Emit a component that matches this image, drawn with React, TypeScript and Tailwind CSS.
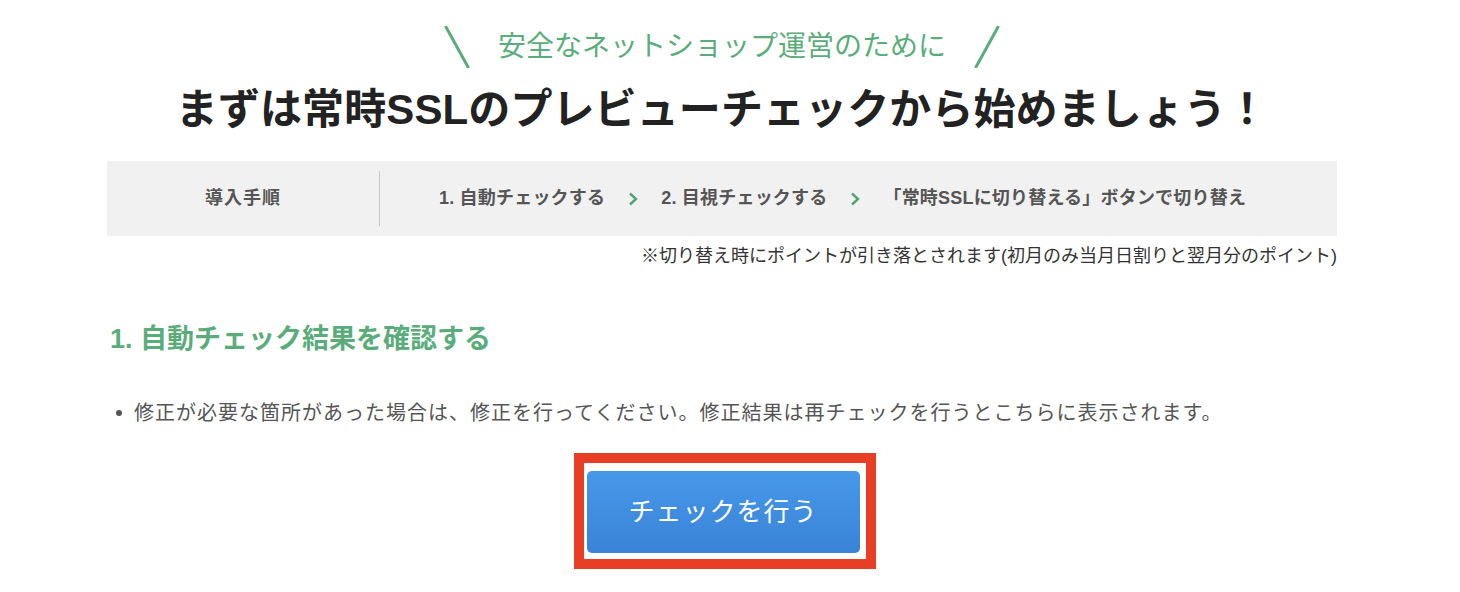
import { Fragment } from 'react'

const font = { fontFamily: '"Liberation Sans", "Noto Sans CJK JP", sans-serif' }

const steps = ['1. 自動チェックする', '2. 目視チェックする', '「常時SSLに切り替える」ボタンで切り替え']

function Slash({ flip }: { flip?: boolean }) {
  return (
    <svg width="28" height="42" viewBox="0 0 28 42" className="shrink-0">
      {flip ? (
        <line x1="25" y1="1" x2="3" y2="41" stroke="#5aad7b" strokeWidth="3" strokeLinecap="round" />
      ) : (
        <line x1="3" y1="1" x2="25" y2="41" stroke="#5aad7b" strokeWidth="3" strokeLinecap="round" />
      )}
    </svg>
  )
}

function Chevron() {
  return (
    <svg width="10" height="14" viewBox="0 0 10 14" className="shrink-0">
      <polyline points="2,1.5 8,7 2,12.5" fill="none" stroke="#4aa86e" strokeWidth="2.4" />
    </svg>
  )
}

export default function App() {
  return (
    <div className="w-[1460px] h-[592px] bg-white text-[#333]" style={font}>
      <div className="ml-[107px] w-[1230px] pt-[27px] flex flex-col">
        {/* Sub heading */}
        <div className="flex items-center justify-center gap-[27px] h-[40px]">
          <Slash />
          <span className="text-[28px] leading-none text-[#5aad7b]">安全なネットショップ運営のために</span>
          <Slash flip />
        </div>

        {/* Title */}
        <h1 className="mt-[19px] text-center text-[42px] leading-[48px] font-bold text-[#222] tracking-[0.1px]">
          まずは常時SSLのプレビューチェックから始めましょう！
        </h1>

        {/* Steps bar */}
        <div className="mt-[27px] h-[75px] bg-[#f1f1f1] flex items-center">
          <div className="w-[272px] text-center text-[18px] font-bold text-[#555] tracking-[1px]">導入手順</div>
          <div className="w-px h-[55px] bg-[#c8c8c8]" />
          <div className="flex items-center pl-[59px] gap-[23px] text-[18px] font-bold text-[#555] tracking-[0.2px]">
            {steps.map((s, i) => (
              <Fragment key={s}>
                {i > 0 && <Chevron />}
                <span>{s}</span>
              </Fragment>
            ))}
          </div>
        </div>

        <p className="mt-[8px] text-right text-[18px] leading-[24px] text-[#333]">
          ※切り替え時にポイントが引き落とされます(初月のみ当月日割りと翌月分のポイント)
        </p>

        {/* Section */}
        <h2 className="mt-[54px] pl-[3px] text-[27px] leading-[34px] font-bold text-[#5aad7b]">
          1. 自動チェック結果を確認する
        </h2>

        <ul className="mt-[43px] pl-[9px] text-[20px] leading-[28px] text-[#555]">
          <li className="flex items-center gap-[12px]">
            <span className="w-[6px] h-[6px] rounded-full bg-[#555] shrink-0" />
            <span className="tracking-[1px]">修正が必要な箇所があった場合は、修正を行ってください。修正結果は再チェックを行うとこちらに表示されます。</span>
          </li>
        </ul>

        {/* Button (highlighted) */}
        <div className="mt-[26px] flex justify-center">
          <div className="border-[10px] border-[#e83e26] pt-[8px] pr-[6px] pb-[6px] pl-[3px] ml-[5px]">
            <button className="w-[273px] h-[82px] rounded-[5px] bg-gradient-to-b from-[#4798ea] to-[#3a83d7] text-white text-[26px] tracking-[1px]">
              チェックを行う
            </button>
          </div>
        </div>
      </div>
    </div>
  )
}
